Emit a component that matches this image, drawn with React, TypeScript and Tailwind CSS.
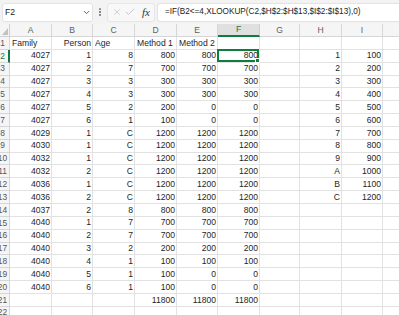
import { Check, ChevronDown, EllipsisVertical, X } from "lucide-react";

const letters = ["A", "B", "C", "D", "E", "F", "G", "H", "I", "J"];
const widths = [
  "w-[42px]",
  "w-[41px]",
  "w-[42px]",
  "w-[42px]",
  "w-[41px]",
  "w-[42px]",
  "w-[40px]",
  "w-[42px]",
  "w-[41px]",
  "w-[64px]",
];

// A..I per row (J stays empty)
const rows: string[][] = [
  ["Family", "Person", "Age", "Method 1", "Method 2", "", "", "", ""],
  ["4027", "1", "8", "800", "800", "800", "", "1", "100"],
  ["4027", "2", "7", "700", "700", "700", "", "2", "200"],
  ["4027", "3", "3", "300", "300", "300", "", "3", "300"],
  ["4027", "4", "3", "300", "300", "300", "", "4", "400"],
  ["4027", "5", "2", "200", "0", "0", "", "5", "500"],
  ["4027", "6", "1", "100", "0", "0", "", "6", "600"],
  ["4029", "1", "C", "1200", "1200", "1200", "", "7", "700"],
  ["4030", "1", "C", "1200", "1200", "1200", "", "8", "800"],
  ["4032", "1", "C", "1200", "1200", "1200", "", "9", "900"],
  ["4032", "2", "C", "1200", "1200", "1200", "", "A", "1000"],
  ["4036", "1", "C", "1200", "1200", "1200", "", "B", "1100"],
  ["4036", "2", "C", "1200", "1200", "1200", "", "C", "1200"],
  ["4037", "2", "8", "800", "800", "800", "", "", ""],
  ["4040", "1", "7", "700", "700", "700", "", "", ""],
  ["4040", "2", "7", "700", "700", "700", "", "", ""],
  ["4040", "3", "2", "200", "200", "200", "", "", ""],
  ["4040", "4", "1", "100", "100", "100", "", "", ""],
  ["4040", "5", "1", "100", "0", "0", "", "", ""],
  ["4040", "6", "1", "100", "0", "0", "", "", ""],
  ["", "", "", "11800", "11800", "11800", "", "", ""],
  ["", "", "", "", "", "", "", "", ""],
];

function FormulaBar() {
  return (
    <div className="flex h-[24px] items-center bg-[#f3f3f3] pl-[2px]">
      <div className="flex h-[19px] w-[91px] items-center justify-between rounded-[3px] border border-[#e3e3e3] bg-white pl-[2px] pr-[1px]">
        <span className="text-[8.6px] text-[#222]">F2</span>
        <ChevronDown size={9} strokeWidth={2.2} className="text-[#444]" />
      </div>
      <div className="flex w-[14px] justify-center">
        <EllipsisVertical size={10} strokeWidth={2.5} className="text-[#555]" />
      </div>
      <div className="flex h-[19px] w-[48px] items-center rounded-[3px] border border-[#e6e6e6] bg-[#f8f8f8] pl-[4px]">
        <X size={10} strokeWidth={1.4} className="text-[#b5b5b5]" />
        <Check size={12} strokeWidth={1.4} className="ml-[2px] text-[#b5b5b5]" />
        <span className="ml-[6px] font-['Liberation_Serif',serif] text-[11px] italic text-[#333]">
          fx
        </span>
      </div>
      <div className="ml-[2px] flex h-[19px] flex-1 items-center rounded-l-[3px] border border-r-0 border-[#e3e3e3] bg-white pl-[7px]">
        <span className="whitespace-nowrap text-[8.2px] text-[#222]">
          =IF(B2&lt;=4,XLOOKUP(C2,$H$2:$H$13,$I$2:$I$13),0)
        </span>
      </div>
    </div>
  );
}

function ColumnHeaders() {
  return (
    <div className="flex h-[13px]">
      <div className="relative w-[10px] shrink-0 border-b border-r border-[#d0d0d0] bg-[#f5f5f5]">
        <svg width="10" height="12" className="absolute left-0 top-0">
          <polygon points="2,11 8,11 8,4" fill="#c2c2c2" />
        </svg>
      </div>
      {letters.map((l, i) =>
        l === "F" ? (
          <div
            key={l}
            className={`${widths[i]} flex shrink-0 items-center justify-center border-b-2 border-r border-b-[#107c41] border-r-[#d0d0d0] bg-[#e0e0e0] text-[8.6px] text-[#107c41]`}
          >
            {l}
          </div>
        ) : (
          <div
            key={l}
            className={`${widths[i]} flex shrink-0 items-center justify-center border-b border-r border-[#d6d6d6] bg-[#f5f5f5] text-[8.6px] text-[#616161]`}
          >
            {/* J sits past the right edge of the window */}
            {l === "J" ? "" : l}
          </div>
        ),
      )}
    </div>
  );
}

export default function App() {
  return (
    <div className="h-[315px] w-[399px] overflow-hidden bg-white font-['Liberation_Sans',Arial,sans-serif]">
      <FormulaBar />
      <ColumnHeaders />

      {rows.map((row, r) => (
        <div key={r} className="flex h-[12.85px]">
          {/* Row header (left part is cut off by the screenshot) */}
          <div
            className={`w-[10px] shrink-0 overflow-hidden border-b border-[#d6d6d6] bg-[#f5f5f5] ${
              r === 1 ? "border-r-2 border-r-[#107c41]" : "border-r border-r-[#d6d6d6]"
            }`}
          >
            <div
              className={`-ml-[5px] flex h-full w-[15px] items-center justify-center text-[8.4px] leading-none ${
                r === 1 ? "text-[#107c41]" : "text-[#555]"
              }`}
            >
              {r + 1}
            </div>
          </div>

          {letters.map((l, c) => {
            const v = row[c] ?? "";
            const left = r === 0 && v !== "Person";
            const selected = r === 1 && l === "F";
            return (
              <div
                key={l}
                className={`${widths[c]} relative flex shrink-0 items-center whitespace-nowrap border-b border-r border-[#e2e2e2] text-[8.6px] leading-none text-[#1f1f1f] ${
                  left ? "justify-start pl-[2px]" : "justify-end pr-[1px]"
                }`}
              >
                {v}
                {selected && (
                  <div className="absolute -left-[1px] -top-[1px] h-[calc(100%+1px)] w-[calc(100%+1px)] border-2 border-[#107c41]">
                    <div className="absolute -bottom-[3px] -right-[3px] h-[5px] w-[5px] border border-white bg-[#107c41]" />
                  </div>
                )}
              </div>
            );
          })}
        </div>
      ))}
    </div>
  );
}
